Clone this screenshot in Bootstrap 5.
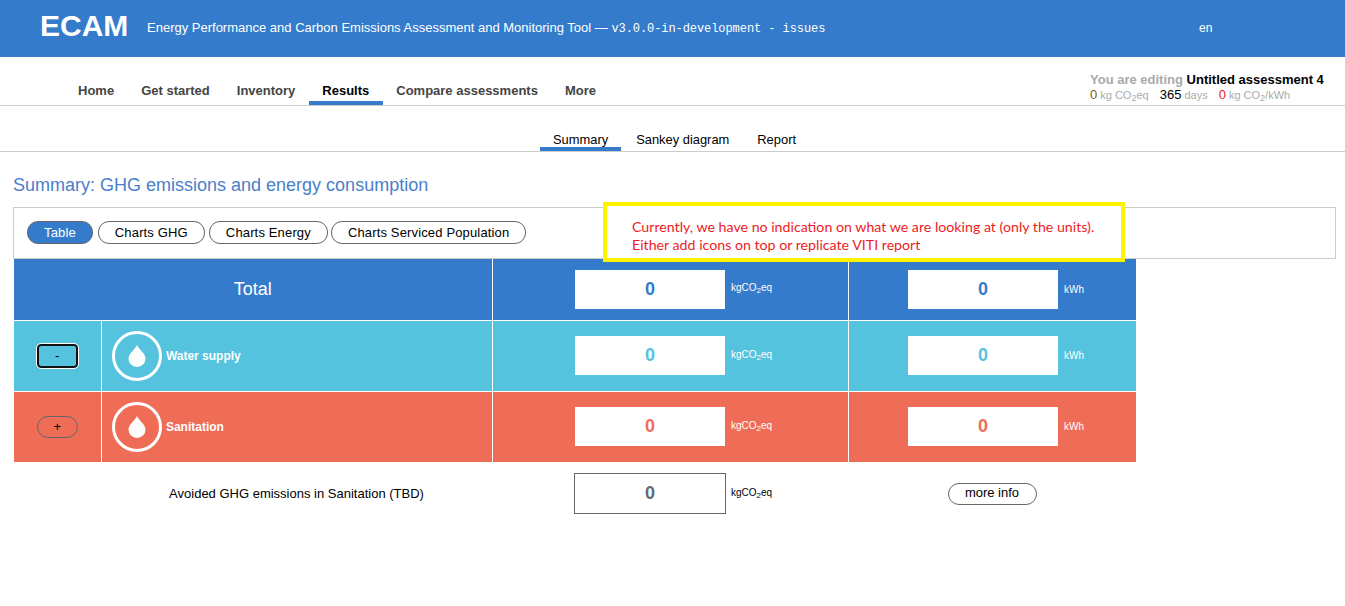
<!DOCTYPE html>
<html lang="en">
<head>
<meta charset="utf-8">
<title>ECAM</title>
<link href="https://cdn.jsdelivr.net/npm/bootstrap@5.3.0/dist/css/bootstrap.min.css" rel="stylesheet">
<style>
body{font-family:"Liberation Sans",Arial,sans-serif;font-size:13px;color:#000;background:#fff;overflow:hidden;position:relative;min-height:606px}
.topbar{height:57px;background:#347bcb;color:#fff;padding-left:40px}
.brand-name{font-size:30px;font-weight:700;width:107px;line-height:1;margin-top:-5px}
.brand-desc{font-size:13px;margin-bottom:2px}
.brand-ver{font-family:"Liberation Mono",monospace;font-size:12px;letter-spacing:-.07px}
.lang{position:absolute;left:1199px;top:19px;font-size:12px}
.mainbar{height:49px;border-bottom:1px solid #ccc;padding-left:64.5px;padding-right:22px}
.mainlink{display:block;font-weight:700;font-size:13px;color:#444;padding:26px 13.5px 0;height:48px;line-height:15px;text-decoration:none;border-bottom:4px solid transparent}
.mainlink.sel{color:#000;border-bottom-color:#347bcb}
.status{margin-top:16px;line-height:14px;width:234px;padding-left:1px}
.status-head{font-size:13px;font-weight:700;color:#aaa;white-space:nowrap}
.status-head b{color:#000}
.status-line{font-size:13px;white-space:nowrap;margin-top:1px}
.status-line small{font-size:11px;color:#aaa;margin-left:3px}
.status-line sub{font-size:9px}
.st-num{margin-left:11px}
.st-amber{color:#8a5a00}
.st-red{color:#e8212b}
.subbar{height:46px;border-bottom:1px solid #ccc;padding-left:540px;gap:2px}
.sublink{display:block;font-size:12.9px;color:#000;padding:26px 13px 0;height:45px;line-height:16px;text-decoration:none;border-bottom:4px solid transparent}
.sublink.sel{border-bottom-color:#347bcb}
.pagehead{font-size:18px;font-weight:400;color:#4a80c9;margin:23px 0 0 13px;line-height:20px}
.tabbox{margin:12px 9px 0 13px;height:52px;border:1px solid #ccc;padding:13px 13px 0;gap:3px}
.pill{background:#fff;border:1px solid #666;border-radius:11px;height:23px;line-height:20px;padding:0 16px;font-size:13px;font-family:inherit;color:#000;letter-spacing:.15px}
.pill.on{background:#347bcb;color:#fff;margin-right:2px}
.pill.after-gap{margin-right:1px}
.sumtable{table-layout:fixed;width:1122px;margin-left:14px;border-collapse:collapse;color:#fff}
.sumtable td{padding:0;border:1px solid #fff;vertical-align:middle}
.sumtable tr>td:first-child{border-left:0}
.sumtable tr:first-child td{border-top:0}
.r-total{background:#347bcb;height:61px}
.r-water{background:#55c3de;height:71px}
.r-san{background:#ef6d57;height:71px}
.r-avoid{height:63px;color:#000}
.r-avoid td{border:0!important}
.total-label{font-size:18px;text-align:center}
.cellbox{padding-left:8px}
.valbox{width:150px;height:39px;background:#fff;font-size:18px;font-weight:700;display:flex;align-items:center;justify-content:center}
.v-blue{color:#347bcb}.v-teal{color:#55c3de}.v-red{color:#ef6d57}
.valbox.v-gray{color:#5f6b73;border:1px solid #666;width:152px;height:41px;margin-left:-1px;margin-right:-1px}
.unitlabel{font-size:10px;margin-left:6px;width:42px;margin-top:-2px;line-height:12px;white-space:nowrap}
.unitlabel.kwh{width:20px;margin-top:1px}
.unitlabel sub{font-size:8px}
.togglebtn{width:41px;height:22px;font-size:13px;line-height:18px;padding:0;background:transparent;border:1px solid #666;border-radius:11px;color:#000}
.togglebtn.focused{height:24px;border:2px solid #111;border-radius:4px;outline:1px solid #fff;line-height:17px}
.namecell{padding-left:10px}
.iconring{width:50px;height:50px;border:3px solid #fff;border-radius:50%;flex:none}
.rowname{font-size:12px;font-weight:700;margin-left:4.4px}
.avoid-label{font-size:13px;text-align:center}
.moreinfo{background:#fff;border:1px solid #666;border-radius:11px;height:22px;width:89px;padding:0 0 2px;font-size:13px;line-height:17px;color:#000}
.note{position:absolute;left:603px;top:202px;width:522px;height:60px;background:#fff;border:4px solid #fff200;padding:12px 0 0 25px;font-family:Lato,"Liberation Sans",sans-serif;font-size:14.2px;line-height:18px;color:#ed1c24;white-space:nowrap}
</style>
</head>
<body>
<header class="topbar d-flex align-items-center">
  <div class="brand-name">ECAM</div>
  <div class="brand-desc">Energy Performance and Carbon Emissions Assessment and Monitoring Tool — <span class="brand-ver">v3.0.0-in-development - issues</span></div>
  <div class="lang">en</div>
</header>
<nav class="mainbar d-flex justify-content-between">
  <div class="d-flex">
    <a class="mainlink" href="#">Home</a>
    <a class="mainlink" href="#">Get started</a>
    <a class="mainlink" href="#">Inventory</a>
    <a class="mainlink sel" href="#">Results</a>
    <a class="mainlink" href="#">Compare assessments</a>
    <a class="mainlink" href="#">More</a>
  </div>
  <div class="status">
    <div class="status-head">You are editing <b>Untitled assessment 4</b></div>
    <div class="status-line"><span class="st-amber">0</span><small>kg CO<sub>2</sub>eq</small><span class="st-num">365</span><small>days</small><span class="st-num st-red">0</span><small>kg CO<sub>2</sub>/kWh</small></div>
  </div>
</nav>
<nav class="subbar d-flex">
  <a class="sublink sel" href="#">Summary</a>
  <a class="sublink" href="#">Sankey diagram</a>
  <a class="sublink" href="#">Report</a>
</nav>
<h1 class="pagehead">Summary: GHG emissions and energy consumption</h1>
<div class="tabbox d-flex align-items-start">
  <button class="pill on">Table</button>
  <button class="pill after-gap">Charts GHG</button>
  <button class="pill">Charts Energy</button>
  <button class="pill">Charts Serviced Population</button>
</div>
<table class="sumtable">
  <colgroup><col style="width:87px"><col style="width:391px"><col style="width:356px"><col style="width:288px"></colgroup>
  <tr class="r-total">
    <td colspan="2" class="total-label">Total</td>
    <td><div class="cellbox d-flex justify-content-center align-items-center"><div class="valbox v-blue">0</div><div class="unitlabel">kgCO<sub>2</sub>eq</div></div></td>
    <td><div class="cellbox d-flex justify-content-center align-items-center"><div class="valbox v-blue">0</div><div class="unitlabel kwh">kWh</div></div></td>
  </tr>
  <tr class="r-water">
    <td class="text-center"><button class="togglebtn focused">-</button></td>
    <td><div class="namecell d-flex align-items-center"><div class="iconring d-flex align-items-center justify-content-center"><svg width="18" height="22" viewBox="0 0 18 22"><path d="M9 0C7.500 4 .5 8.500 .5 13.500a8.500 8.500 0 0 0 17 0C17.500 8.500 10.500 4 9 0Z" fill="#fff"/></svg></div><span class="rowname">Water supply</span></div></td>
    <td><div class="cellbox d-flex justify-content-center align-items-center"><div class="valbox v-teal">0</div><div class="unitlabel">kgCO<sub>2</sub>eq</div></div></td>
    <td><div class="cellbox d-flex justify-content-center align-items-center"><div class="valbox v-teal">0</div><div class="unitlabel kwh">kWh</div></div></td>
  </tr>
  <tr class="r-san">
    <td class="text-center"><button class="togglebtn">+</button></td>
    <td><div class="namecell d-flex align-items-center"><div class="iconring d-flex align-items-center justify-content-center"><svg width="18" height="22" viewBox="0 0 18 22"><path d="M9 0C7.500 4 .5 8.500 .5 13.500a8.500 8.500 0 0 0 17 0C17.500 8.500 10.500 4 9 0Z" fill="#fff"/></svg></div><span class="rowname">Sanitation</span></div></td>
    <td><div class="cellbox d-flex justify-content-center align-items-center"><div class="valbox v-red">0</div><div class="unitlabel">kgCO<sub>2</sub>eq</div></div></td>
    <td><div class="cellbox d-flex justify-content-center align-items-center"><div class="valbox v-red">0</div><div class="unitlabel kwh">kWh</div></div></td>
  </tr>
  <tr class="r-avoid">
    <td></td>
    <td class="avoid-label">Avoided GHG emissions in Sanitation (TBD)</td>
    <td><div class="cellbox d-flex justify-content-center align-items-center"><div class="valbox v-gray">0</div><div class="unitlabel">kgCO<sub>2</sub>eq</div></div></td>
    <td class="text-center"><button class="moreinfo">more info</button></td>
  </tr>
</table>
<div class="note">Currently, we have no indication on what we are looking at (only the units).<br>Either add icons on top or replicate VITI report</div>
<script src="https://cdn.jsdelivr.net/npm/bootstrap@5.3.0/dist/js/bootstrap.bundle.min.js"></script>
</body>
</html>
